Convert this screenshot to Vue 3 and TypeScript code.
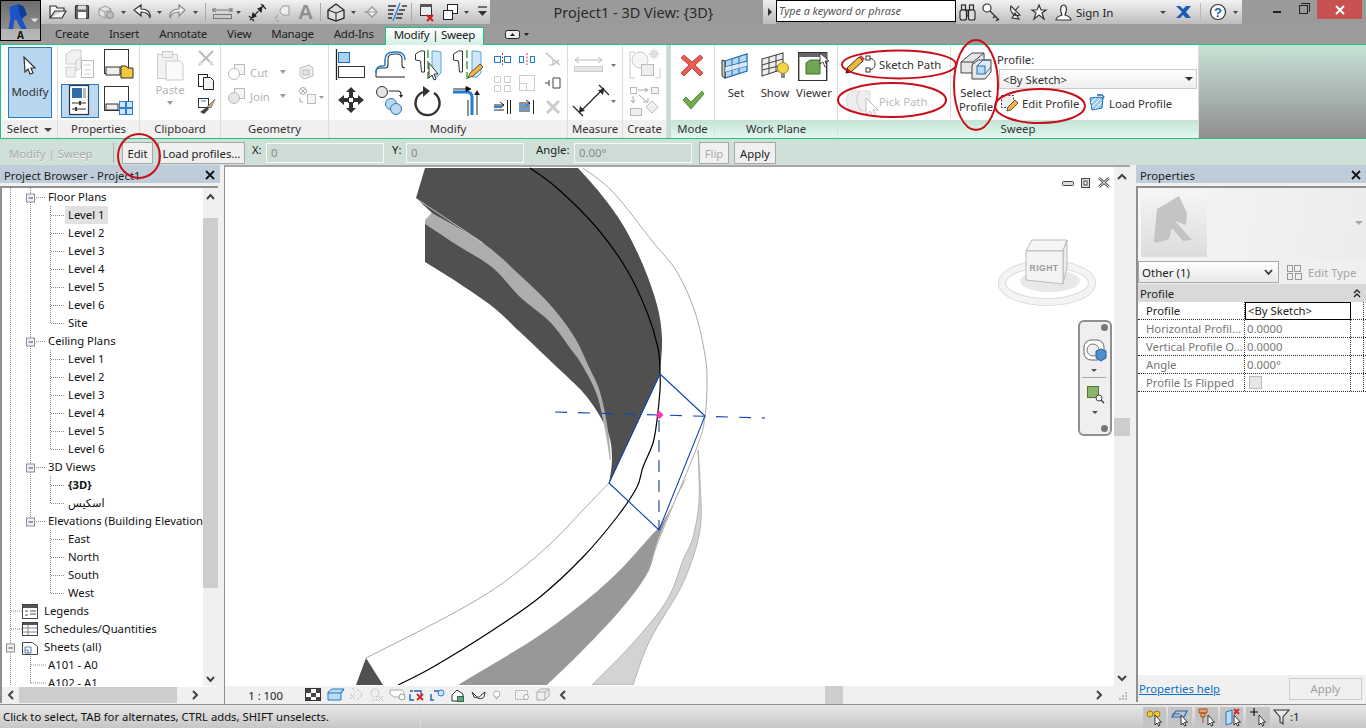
<script setup lang="ts">
interface TreeRow { t: string; cls: string; sel?: boolean; bold?: boolean }
const levels = (prefix: string, n: number): TreeRow[] =>
  Array.from({ length: n }, (_, i) => ({ t: `${prefix} ${i + 1}`, cls: 'leaf' }))
const treeRows: TreeRow[] = [
  { t: 'Floor Plans', cls: 'group' },
  { t: 'Level 1', cls: 'leaf', sel: true },
  ...levels('Level', 6).slice(1),
  { t: 'Site', cls: 'leaf' },
  { t: 'Ceiling Plans', cls: 'group' },
  ...levels('Level', 6),
  { t: '3D Views', cls: 'group' },
  { t: '{3D}', cls: 'leaf', bold: true },
  { t: 'اسکیس', cls: 'leaf' },
  { t: 'Elevations (Building Elevation', cls: 'group' },
  { t: 'East', cls: 'leaf' },
  { t: 'North', cls: 'leaf' },
  { t: 'South', cls: 'leaf' },
  { t: 'West', cls: 'leaf' },
  { t: 'Legends', cls: 'root' },
  { t: 'Schedules/Quantities', cls: 'root' },
  { t: 'Sheets (all)', cls: 'root' },
  { t: 'A101 - A0', cls: 'group' },
  { t: 'A102 - A1', cls: 'group' }
]
const tabs = ['Create', 'Insert', 'Annotate', 'View', 'Manage', 'Add-Ins']
const guides = [
  'M10.5 188V686', 'M30.5 188V517', 'M50.5 206V323', 'M50.5 350V449', 'M50.5 476V503', 'M50.5 530V593',
  'M30.5 652V683', 'M11 611H22', 'M11 629H22', 'M31 665H46', 'M31 683H46'
]
const boxes = [[30.5, 198], [30.5, 342], [30.5, 468], [30.5, 522], [10.5, 648]]
const groupStubs = [198, 342, 468, 522]
const leafStubs = [215, 233, 251, 269, 287, 305, 323, 359, 377, 395, 413, 431, 449, 485, 503, 539, 557, 575, 593]
const props = [
  { k: 'Horizontal Profil...', v: '0.0000' },
  { k: 'Vertical Profile O...', v: '0.0000' },
  { k: 'Angle', v: '0.000°' }
]

// Catmull-Rom curve through model points, in page coordinates
type Pt = number[]
const curve = (pts: Pt[], first = false): string => {
  let d = `${first ? 'M' : 'L'}${pts[0][0]} ${pts[0][1]}`
  for (let i = 0; i < pts.length - 1; i++) {
    const p0 = pts[Math.max(i - 1, 0)]
    const p1 = pts[i]
    const p2 = pts[i + 1]
    const p3 = pts[Math.min(i + 2, pts.length - 1)]
    const c1x = p1[0] + (p2[0] - p0[0]) / 6
    const c1y = p1[1] + (p2[1] - p0[1]) / 6
    const c2x = p2[0] - (p3[0] - p1[0]) / 6
    const c2y = p2[1] - (p3[1] - p1[1]) / 6
    d += `C${c1x.toFixed(1)} ${c1y.toFixed(1)} ${c2x.toFixed(1)} ${c2y.toFixed(1)} ${p2[0]} ${p2[1]}`
  }
  return d
}
const darkBand =
  'M425 168' +
  curve([[578, 168], [600, 193], [623, 225], [643, 265], [657, 305], [662, 338], [660, 375]]) +
  curve([[609, 484], [612, 457], [607, 430], [587, 397], [560, 370], [520, 332], [493, 307], [457, 282], [425, 262]]) +
  'L425 221L432 213L416 198Z'
const greyStrip =
  curve([[432, 213], [483, 243], [522, 277], [553, 308], [575, 338], [588, 365], [600, 392], [608, 430], [611, 460]], true) +
  curve([[610, 460], [605, 430], [597, 395], [582, 365], [570, 348], [550, 322], [520, 297], [493, 268], [457, 245], [425, 224]]) +
  'L425 220Z'
const midBand =
  curve([[687, 477], [678, 493], [658, 540], [648, 572], [623, 607], [583, 650], [547, 685]], true) +
  curve([[458, 685], [483, 670], [537, 637], [583, 603], [617, 573], [650, 537], [664, 520], [687, 477]]) + 'Z'
const lightBand =
  curve([[698, 450], [700, 480], [700, 530], [683, 583], [650, 640], [633, 685]], true) +
  curve([[592, 685], [633, 643], [667, 600], [683, 560], [693, 537], [699, 500], [698, 450]]) + 'Z'
const outerLine = curve([[583, 168], [613, 192], [653, 242], [677, 272], [695, 312], [705, 355], [707, 383], [705, 416], [697, 447], [660, 537], [648, 572]], true)
const innerLine = curve([[609, 483], [583, 510], [547, 547], [500, 585], [450, 615], [366, 658]], true)
const pathLine = curve([[530, 168], [557, 188], [597, 228], [627, 270], [647, 312], [658, 348], [660, 373], [660, 390], [657, 420], [653, 443], [643, 467], [637, 487], [617, 517], [583, 557], [540, 597], [493, 630], [433, 667], [398, 685]], true)
</script>

<template>
  <div class="app">
    <!-- title bar -->
    <header class="titlebar">
      <svg class="qat" width="449" height="24" viewBox="41 0 449 24">
        <g fill="none" stroke="#333" stroke-width="1.2">
          <path d="M50 18V6h6l1 2h7v3H55l-5 7h12l4-7h-3" fill="#f4f4f4"/>
          <rect x="75.500" y="5.500" width="13" height="13" rx="1" fill="#666"/>
          <rect x="78" y="5.500" width="8" height="4" fill="#ddd" stroke="none"/>
          <rect x="78" y="12" width="8" height="6.500" fill="#fff" stroke="none"/>
        </g>
        <g fill="#e2e2e2" stroke="#999">
          <path d="M99 9l6-3 6 3v6l-6 3-6-3z"/><path d="M99 9l6 3 6-3M105 12v6" fill="none"/>
          <circle cx="110" cy="15" r="3.500" fill="#bbb" stroke="#888"/>
        </g>
        <path d="M121 11h5l-2.500 3zM157 11h5l-2.500 3zM193 11h5l-2.500 3zM236 11h5l-2.500 3zM351 11h5l-2.500 3zM464 11h5l-2.500 3z" fill="#444"/>
        <path d="M150 18c-1-4-4-6-9-6v4l-7-6 7-5v4c6 0 10 3 9 9z" fill="#fff" stroke="#333" stroke-width="1.200"/>
        <path d="M170 18c1-4 4-6 9-6v4l6-6-6-5v4c-6 0-10 3-9 9z" fill="#eee" stroke="#888" stroke-width="1.200"/>
        <path d="M205.500 3v18M320.500 3v18M411.500 3v18" stroke="#a9a9a9"/>
        <g stroke="#777" fill="none">
          <path d="M213 10h19M213 8v4M232 8v4M216 8l-3 2 3 2M229 8l3 2-3 2"/>
          <rect x="213.500" y="14.500" width="18" height="4" fill="#ccc"/>
        </g>
        <path d="M250 20l14-15M249 16l5 5M261 4l5 5M252 18l1-5 3 3zM262 7l-1 5-3-3z" stroke="#222" stroke-width="1.100" fill="#222"/>
        <g stroke="#999" fill="none">
          <path d="M275 19l3-5M276 21l3 0"/><path d="M280 10l3-4h6v9h-6l-3-3z" fill="#eee"/>
        </g>
        <text x="298" y="19" class="bigA">A</text>
        <path d="M328 10l8-6 8 6v8l-8 3-8-3z" fill="#ddd" stroke="#222" stroke-width="1.300"/>
        <path d="M328 10l8 3 8-3M336 13v8" fill="none" stroke="#222"/>
        <path d="M372 7l5 5-5 5-5-5z" fill="#f0f0f0" stroke="#999" stroke-width="1.400"/><path d="M377 12h-13" stroke="#999"/>
        <path d="M388 6h8M388 10h6M388 14h5M388 18h4M402 6h5M399 10h6M397 14h6M396 18h6" stroke="#333" stroke-width="1.500"/>
        <path d="M400 3l-7 18" stroke="#2a8adf" stroke-width="1.400"/>
        <rect x="420.500" y="4.500" width="11" height="11" fill="#eee" stroke="#333"/>
        <rect x="420" y="4" width="12" height="3" fill="#555"/>
        <path d="M427 15l6 6M433 15l-6 6" stroke="#d81818" stroke-width="2"/>
        <rect x="447.500" y="4.500" width="10" height="9" fill="#fff" stroke="#222"/>
        <rect x="443.500" y="10.500" width="9" height="9" fill="#fff" stroke="#222"/>
        <path d="M478 7h9" stroke="#333" stroke-width="1.300"/><path d="M478 11h9l-4.500 5z" fill="#333"/>
      </svg>
      <div class="doc-title">Project1 - 3D View: {3D}</div>
      <div class="search-arrow"><i></i></div>
      <div class="search">Type a keyword or phrase</div>
      <div class="help-tools">
        <svg width="120" height="24" viewBox="957 0 120 24">
          <g fill="#dcdcdc" stroke="#222" stroke-width="1.100">
            <rect x="962.500" y="5" width="4" height="5"/><rect x="970.500" y="5" width="4" height="5"/>
            <rect x="961" y="10" width="6.500" height="10" rx="2"/><rect x="969.500" y="10" width="6.500" height="10" rx="2"/>
            <path d="M967.500 10h2v6h-2z" fill="#888"/>
          </g>
          <circle cx="988" cy="8" r="4" fill="#fff" stroke="#333" stroke-width="1.200"/>
          <path d="M991 11l9 9M996 16l-2 2M999 19l-2 2" stroke="#333" stroke-width="1.400"/>
          <path d="M1012 6c-2 6 3 11 9 9zM1016 11l4-5M1013 18l3-5 4 6z" fill="#eee" stroke="#333" stroke-width="1.100"/>
          <path d="M1040 5l2 5h5l-4 3 2 6-5-4-5 4 2-6-4-3h5z" fill="#fff" stroke="#333" stroke-width="1.200"/>
          <path d="M1065 5c-3 0-4 3-3 7l1 3c-3 1-6 2-6 5h15c0-3-3-4-6-5l1-3c1-4 0-7-2-7z" fill="#fff" stroke="#333" stroke-width="1.200"/>
        </svg>
        <span class="signin">Sign In</span>
        <svg class="help-right" width="88" height="24" viewBox="1155 0 88 24">
          <path d="M1161 11h6l-3 3z" fill="#444"/>
          <path d="M1177 6l6 6-6 6h4l3-3 3 3h5l-5-6 5-6h-5l-3 3-3-3z" fill="#1f5cb0"/>
          <path d="M1201.500 3v18" stroke="#bbb"/>
          <circle cx="1219" cy="12" r="7.500" fill="#fff" stroke="#333" stroke-width="1.200"/>
          <text x="1219" y="17" class="qmark">?</text>
          <path d="M1234 11h5l-2.500 3z" fill="#444"/>
        </svg>
      </div>
      <div class="win">
        <span class="w-min"></span><span class="w-max"></span>
        <span class="w-close"><svg width="10" height="10" viewBox="0 0 10 10"><path d="M1 1l8 8M9 1l-8 8" stroke="#fff" stroke-width="2"/></svg></span>
      </div>
    </header>

    <!-- tabs -->
    <nav class="tabs">
      <span v-for="t in tabs" :key="t" class="tab">{{ t }}</span>
      <span class="tab active">Modify | Sweep</span>
      <svg class="tab-toggle" width="24" height="10" viewBox="0 0 24 10">
        <rect x=".5" y=".5" width="14" height="8" rx="2" fill="#eee" stroke="#222"/>
        <path d="M5 6l2.500-3L10 6z" fill="#222"/><path d="M19 3h5l-2.500 3z" fill="#222"/>
      </svg>
    </nav>

    <!-- ribbon -->
    <section class="ribbon">
      <div class="panel p-select">
        <div class="body">
          <button class="modify-btn">
            <svg width="20" height="24" viewBox="0 0 20 24"><path d="M4 3l1 15 3-3 2 5 3-1-2-5h4z" fill="#fff" stroke="#333" stroke-width="1.200"/></svg>
            <span>Modify</span>
          </button>
        </div>
        <div class="plabel">Select <em class="tri"></em></div>
      </div>

      <div class="panel p-props">
        <div class="body">
          <svg width="81" height="75" viewBox="58 45 81 75">
            <g fill="#f1f1f1" stroke="#ccc">
              <path d="M66 54l6-4h9v10l-6 4h-9z"/><path d="M66 67h9v10h-9zM76 61l5-3v10l-5 3z"/>
            </g>
            <rect x="81.500" y="60.500" width="12" height="17" fill="#fff" stroke="#bbb"/><path d="M84 65h7M84 70h7M84 74h7" stroke="#ccc"/>
            <rect x="104.500" y="49.500" width="24" height="24" fill="#fff" stroke="#333"/>
            <rect x="106" y="67" width="14" height="8" fill="#eee" stroke="#333"/>
            <path d="M121 66h5l2 2h5v10h-12z" fill="#f5c93c" stroke="#333"/>
            <rect x="61.500" y="84.500" width="37" height="33" fill="#bcd9f2" stroke="#2a7ac0"/>
            <rect x="69.500" y="85.500" width="19" height="29" fill="#fff" stroke="#333" stroke-width="1.200"/>
            <rect x="72" y="88" width="10" height="10" fill="#2f6ca8"/><rect x="83" y="88" width="3" height="10" fill="#bbb"/>
            <path d="M72 103h14M72 109h14" stroke="#333"/><path d="M80 101v4M76 107v4" stroke="#333" stroke-width="2"/>
            <rect x="104.500" y="86.500" width="24" height="24" fill="#fff" stroke="#333"/>
            <rect x="106" y="104" width="12" height="6" fill="#eee" stroke="#333"/>
            <g fill="#cfe6fa" stroke="#2a83d1"><rect x="119.500" y="101.500" width="6" height="6"/><rect x="126.500" y="101.500" width="6" height="6"/><rect x="119.500" y="108.500" width="6" height="6"/><rect x="126.500" y="108.500" width="6" height="6"/></g>
          </svg>
        </div>
        <div class="plabel">Properties</div>
      </div>

      <div class="panel p-clip">
        <div class="body clip-body">
          <div class="paste">
            <svg width="28" height="32" viewBox="0 0 28 32"><rect x="1.500" y="4.500" width="20" height="24" fill="#f2f2f2" stroke="#ccc"/><rect x="6.500" y="1.500" width="10" height="6" fill="#eee" stroke="#ccc"/><path d="M10 11h14l3 3v16H10z" fill="#fafafa" stroke="#ccc"/></svg>
            <span>Paste</span>
            <em class="tri small"></em>
          </div>
          <div class="clip-side">
            <svg width="16" height="16" viewBox="0 0 16 16"><path d="M1 1l14 14M15 1L1 15" stroke="#bbb" stroke-width="2"/><circle cx="3" cy="13" r="2" fill="#ddd"/><circle cx="13" cy="13" r="2" fill="#ddd"/></svg>
            <svg width="16" height="16" viewBox="0 0 16 16"><rect x=".5" y=".5" width="9" height="12" fill="#fff" stroke="#222"/><path d="M5.500 3.500h7l3 3v9h-10z" fill="#f2f2f2" stroke="#222"/></svg>
            <svg width="18" height="16" viewBox="0 0 18 16"><rect x=".5" y=".5" width="10" height="9" fill="#fff" stroke="#333"/><path d="M3 3h5" stroke="#2a7ac0"/><path d="M2 14l7-5 2 2-5 5z" fill="#444"/><path d="M9 9l8-8-4 9z" fill="#c9a46a" stroke="#555" stroke-width=".6"/></svg>
          </div>
        </div>
        <div class="plabel">Clipboard</div>
      </div>

      <div class="panel p-geo">
        <div class="body geo-body">
          <div class="geo-row">
            <svg width="20" height="18" viewBox="0 0 20 18"><rect x="7.500" y="1.500" width="10" height="10" fill="#f6f6f6" stroke="#bbb"/><circle cx="7" cy="11" r="5.500" fill="#fff" stroke="#bbb"/></svg>
            <span class="geo-t">Cut</span><em class="tri small"></em>
            <svg class="geo-end" width="16" height="16" viewBox="0 0 16 16"><path d="M2 4l9-3 4 3v8l-9 3-4-3z" fill="#f0f0f0" stroke="#bbb"/><rect x="5" y="6" width="6" height="5" fill="#e2e2e2" stroke="#bbb"/></svg>
          </div>
          <div class="geo-row">
            <svg width="20" height="18" viewBox="0 0 20 18"><rect x="7.500" y="1.500" width="10" height="10" fill="#f6f6f6" stroke="#bbb"/><circle cx="7" cy="11" r="5.500" fill="#e6e6e6" stroke="#bbb"/></svg>
            <span class="geo-t">Join</span><em class="tri small"></em>
            <svg class="geo-end" width="26" height="18" viewBox="0 0 26 18"><circle cx="5" cy="4" r="3.500" fill="none" stroke="#aaa"/><path d="M3 2l4 4M7 2l-4 4M2 11v4h3" stroke="#aaa" fill="none"/><rect x="9.500" y="7.500" width="8" height="9" fill="#f4f4f4" stroke="#bbb"/><path d="M21 9h5l-2.500 3z" fill="#999"/></svg>
          </div>
        </div>
        <div class="plabel">Geometry</div>
      </div>

      <div class="panel p-mod">
        <div class="body">
          <svg width="237" height="75" viewBox="329 45 237 75">
            <path d="M336.500 49v31" stroke="#222" stroke-width="1.300"/>
            <rect x="338.500" y="52.500" width="11" height="10" fill="#a9d1f2" stroke="#1d6fb8"/>
            <rect x="338.500" y="66.500" width="26" height="11" fill="#fff" stroke="#333"/>
            <path d="M376 76v-5c0-3 2-4 4-4h5c2 0 3-1 3-3v-6c0-4 3-5 6-5h3c3 0 5 2 5 5v6c0 2 1 3 3 3" fill="none" stroke="#333" stroke-width="1.100" transform="translate(0 1)"/>
            <path d="M376 71c0-5 2-7 6-7h2c1 0 1-1 1-2v-4c0-6 4-8 9-8h3c5 0 8 3 8 8" fill="none" stroke="#1f7ecf" stroke-width="1.500" transform="translate(0 2)"/>
            <path d="M376 77h29" stroke="#333" stroke-width="1.100"/>
            <path d="M415.500 54l5-3h4v21h-3l-1-11-5-1z" fill="#fff" stroke="#333"/>
            <path d="M428 50v29" stroke="#3fa83f" stroke-width="1.500" stroke-dasharray="8 3"/>
            <path d="M441 52l-5-1h-4v26h5l4-4z" fill="#cfe6f7" stroke="#5aa5dc"/>
            <path d="M429 63v15l3-3 2 5 2-1-2-5h4z" fill="#fff" stroke="#333"/>
            <path d="M453.500 54l5-3h4v21h-3l-1-11-5-1z" fill="#fff" stroke="#333"/>
            <path d="M467 50v29" stroke="#3fa83f" stroke-width="1.500" stroke-dasharray="8 3"/>
            <path d="M481 52l-5-1h-4v26h5l4-4z" fill="#cfe6f7" stroke="#5aa5dc"/>
            <path d="M468 78l2-5 10-9 3 3-10 9z" fill="#f3b53c" stroke="#333" stroke-width=".8"/>
            <path d="M351 87l-5 5h3v6h-5v-3l-6 5 6 5v-3h5v6h-3l5 5 5-5h-3v-6h5v3l6-5-6-5v3h-5v-6h3z" fill="#333"/>
            <rect x="348.500" y="97.500" width="5" height="5" fill="#fff" stroke="#333"/>
            <circle cx="382" cy="92" r="5.500" fill="#e4e4e4" stroke="#333"/>
            <path d="M389 91h9c1 0 3 1 3 3v1" fill="none" stroke="#222" stroke-width="1.200"/><path d="M399 95h4l-2 3z" fill="#222"/>
            <circle cx="391" cy="104" r="5.500" fill="#bad8f0" stroke="#2a7ac0"/><circle cx="396" cy="109" r="5.500" fill="#bad8f0" stroke="#2a7ac0"/>
            <path d="M423 92a12 12 0 1 0 11 1" fill="none" stroke="#333" stroke-width="2.400"/>
            <path d="M423 86l7 5-7 6z" fill="#333"/>
            <path d="M453 92h14c3 0 5 2 5 5v18" fill="none" stroke="#1f7ecf" stroke-width="3"/>
            <path d="M453 89h13" stroke="#222"/><path d="M466 86.500l5 2.500-5 2.500zM477 115V94" stroke="#222"/><path d="M480 95l-3-5-3 5z" fill="#222"/>
            <path d="M468 100v16" stroke="#222"/>
            <g fill="none">
              <rect x="494.500" y="56.500" width="6" height="6" stroke="#1f7ecf"/><rect x="504.500" y="56.500" width="6" height="6" stroke="#1f7ecf"/><path d="M502.500 53v12" stroke="#e03030" stroke-dasharray="2 1.500"/>
              <rect x="519.500" y="56.500" width="4" height="6" stroke="#1f7ecf"/><rect x="530.500" y="56.500" width="4" height="6" stroke="#1f7ecf"/><path d="M527 53v12" stroke="#e03030" stroke-dasharray="2 1.500"/>
              <path d="M546 53l7 6v6h-4M554 60l6 5M559 60l-6 5" stroke="#bbb" stroke-width="1.200"/>
              <path d="M494.500 76.500h6v6h-6zM504.500 76.500h6v6h-6zM494.500 85.500h6v6h-6zM504.500 85.500h6v6h-6z" stroke="#ccc"/>
              <rect x="519.500" y="75.500" width="15" height="15" stroke="#ccc"/><rect x="519.500" y="83.500" width="7" height="7" stroke="#ccc"/>
              <path d="M545 83h4M553 78v10h7V78zM549 80v6" stroke="#444"/>
              <path d="M494 105h10M500 102l4 3-4 3M494 110h10M507.500 100v14M510.500 100v14" stroke="#222"/>
              <path d="M494 107h8" stroke="#2a83d1" stroke-width="2"/>
              <path d="M519 103h11M526 100l4 3-4 3M519 107h11M519 111h11M533.500 100v14" stroke="#222"/>
              <path d="M519 105h11M519 109h11" stroke="#2a83d1" stroke-width="1.500"/>
              <path d="M547 101l12 12M559 101l-12 12" stroke="#ccc" stroke-width="3"/>
            </g>
          </svg>
        </div>
        <div class="plabel">Modify</div>
      </div>

      <div class="panel p-meas">
        <div class="body">
          <svg width="52" height="75" viewBox="568 45 52 75">
            <path d="M575 60h27M579 57l-4 3 4 3M598 57l4 3-4 3" fill="none" stroke="#bbb"/>
            <rect x="574.500" y="66.500" width="28" height="5" fill="#e6e6e6" stroke="#ccc"/>
            <path d="M611 64h5l-2.500 3zM611 100h5l-2.500 3z" fill="#777"/>
            <path d="M579 113l25-25M573 106l10 10M599 85l10 10" stroke="#222" stroke-width="1.200"/>
            <path d="M580 106l-1 6 6-1zM603 95l1-6-6 1z" fill="#222"/>
          </svg>
        </div>
        <div class="plabel">Measure</div>
      </div>

      <div class="panel p-create">
        <div class="body">
          <svg width="43" height="75" viewBox="623 45 43 75">
            <path d="M635 52h-5v26h5M655 78h5V68" fill="none" stroke="#ccc"/>
            <circle cx="640" cy="60" r="8" fill="#f7f7f7" stroke="#ccc"/><rect x="641.500" y="64.500" width="12" height="11" fill="#eee" stroke="#bbb"/>
            <circle cx="654" cy="54" r="3.500" fill="#f2f2f2" stroke="#ccc"/><path d="M654 48v12M648 54h12M650 50l8 8M658 50l-8 8" stroke="#ddd"/>
            <rect x="630.500" y="87.500" width="6" height="6" fill="#fff" stroke="#bbb"/><path d="M638 90h9M645 88l3 2-3 2" fill="none" stroke="#aaa"/><rect x="651.500" y="87.500" width="7" height="6" fill="#f2f2f2" stroke="#bbb"/>
            <path d="M633 96v6M631 100l2 3 2-3M639 95l8 7M643 102h5v-4" fill="none" stroke="#aaa"/>
            <rect x="630.500" y="108.500" width="11" height="7" fill="#eee" stroke="#bbb"/><path d="M652 101l6 6-6 6-6-6z" fill="#eee" stroke="#bbb"/>
          </svg>
        </div>
        <div class="plabel">Create</div>
      </div>

      <div class="p-gap"></div>

      <div class="panel ctx p-mode">
        <div class="body">
          <svg width="43" height="75" viewBox="671 45 43 75">
            <path d="M684 55l8 7 8-7 3 3-8 7 8 8-3 3-8-8-8 8-3-3 8-8-8-7z" fill="#e85d52" stroke="#b0352d" stroke-width=".8"/>
            <path d="M683 100l3-3 5 5 11-11 2 3-13 15z" fill="#71ad4c" stroke="#467a2a" stroke-width=".8"/>
          </svg>
        </div>
        <div class="plabel">Mode</div>
      </div>

      <div class="panel ctx p-wp">
        <div class="body wp-body">
          <div class="wp-btn">
            <svg width="30" height="30" viewBox="0 0 30 30"><path d="M4 10l22-7v17L4 27z" fill="#b9d7f0" stroke="#1f6fb8" stroke-width="1.300"/><path d="M11 8v17M18 6v17M4 16l22-6M4 21l22-6" stroke="#1f6fb8"/><path d="M1 9l3 1v17l-3-2z" fill="#ccc" stroke="#333"/><path d="M4 16l22-5v4L4 21z" fill="#e8f2fb" opacity=".7"/></svg>
            <span>Set</span>
          </div>
          <div class="wp-btn">
            <svg width="30" height="30" viewBox="0 0 30 30"><path d="M2 8l21-6v16L2 25z" fill="#eee" stroke="#444" stroke-width="1.100"/><path d="M9 6v17M16 4v17M2 14l21-6M2 19l21-5" stroke="#444"/><circle cx="23" cy="17" r="5.500" fill="#f7d443" stroke="#a78b18"/><rect x="21" y="22" width="4" height="5" fill="#888"/></svg>
            <span>Show</span>
          </div>
          <div class="wp-btn">
            <svg width="32" height="30" viewBox="0 0 32 30"><rect x=".7" y="1.700" width="28" height="28" fill="#fff" stroke="#333" stroke-width="1.400"/><rect x="1" y="2" width="28" height="4" fill="#666"/><path d="M8 12l4-3h10v14H8z" fill="#6da552" stroke="#3d6f2a"/><path d="M22 2v11l3-2 2 5 2-1-2-5h4z" fill="#fff" stroke="#333" stroke-width=".9"/></svg>
            <span>Viewer</span>
          </div>
        </div>
        <div class="plabel">Work Plane</div>
      </div>

      <div class="panel ctx p-sweep">
        <div class="body sweep-body">
          <div class="sw-col1">
            <div class="sw-act">
              <svg width="34" height="22" viewBox="0 0 34 22"><path d="M2 20l1-5L15 4l4 4L7 19z" fill="#f3b53c" stroke="#333"/><path d="M15 4l2-2 4 4-2 2z" fill="#c44"/><path d="M2 20l1-5 4 4z" fill="#222"/><path d="M24 5c4 0 7 2 7 6s-3 6-7 6" fill="none" stroke="#333"/><rect x="22" y="3" width="4" height="4" fill="#fff" stroke="#333"/><rect x="22" y="15" width="4" height="4" fill="#fff" stroke="#333"/></svg>
              <span>Sketch Path</span>
            </div>
            <div class="sw-act off">
              <svg width="34" height="32" viewBox="0 0 34 32"><path d="M7 6c-7 6-6 16 1 20h18V6z" fill="#eee" stroke="#ddd"/><path d="M16 6c-5 5-4 15 2 20" fill="none" stroke="#ddd" stroke-width="2"/><path d="M22 13v17l4-4 3 6 3-1-3-6h5z" fill="#fff" stroke="#bbb"/></svg>
              <span>Pick Path</span>
            </div>
          </div>
          <div class="sw-col2">
            <svg width="34" height="32" viewBox="0 0 34 32"><path d="M2 13l11-9h12v11l-11 9H2z" fill="#e6e6e6" stroke="#444"/><path d="M2 13h12l11-9M14 13v11" fill="none" stroke="#444"/><path d="M13 16l6-5h13v12l-6 7H13z" fill="#e8e8e8" stroke="#444"/><rect x="18" y="17" width="8" height="8" fill="#bdd9f2" stroke="#1f6fb8"/><path d="M26 25l6-7M18 17l6-6h8" fill="none" stroke="#1f6fb8"/></svg>
            <span>Select<br>Profile</span>
          </div>
          <div class="sw-col3">
            <label class="prof-l">Profile:</label>
            <div class="prof-combo"><span>&lt;By Sketch&gt;</span><em class="tri dark"></em></div>
            <div class="prof-acts">
              <div class="prof-act ed">
                <svg width="18" height="18" viewBox="0 0 18 18"><rect x=".5" y="1.500" width="12" height="12" fill="#eee" stroke="#333" stroke-dasharray="2 1.500"/><path d="M6 17l1-4 7-7 3 3-7 7z" fill="#f3b53c" stroke="#333" stroke-width=".8"/></svg>
                <span>Edit Profile</span>
              </div>
              <div class="prof-act">
                <svg width="17" height="18" viewBox="0 0 17 18"><path d="M2 4l10-1 3 1-1 10-10 2z" fill="#9ccbee" stroke="#1f6fb8"/><path d="M4 13l8-8M3 9l5-5M7 15l7-7" stroke="#fff"/><path d="M9 1h5l2 2-2 2" fill="none" stroke="#1f6fb8" stroke-width="1.300"/></svg>
                <span>Load Profile</span>
              </div>
            </div>
          </div>
        </div>
        <div class="plabel">Sweep</div>
      </div>
      <div class="rib-fill"></div>
    </section>

    <!-- options bar -->
    <section class="options">
      <span class="opt-title">Modify | Sweep</span>
      <span class="opt-sep"></span>
      <button class="opt-btn b-edit">Edit</button>
      <button class="opt-btn b-load">Load profiles...</button>
      <span class="opt-l l-x">X:</span><span class="opt-in i-x">0</span>
      <span class="opt-l l-y">Y:</span><span class="opt-in i-y">0</span>
      <span class="opt-l l-a">Angle:</span><span class="opt-in i-a">0.00°</span>
      <button class="opt-btn b-flip" disabled>Flip</button>
      <button class="opt-btn b-apply">Apply</button>
    </section>

    <!-- main -->
    <main class="main">
      <aside class="browser">
        <div class="dock-h"><span>Project Browser - Project1</span><svg width="10" height="10" viewBox="0 0 10 10"><path d="M1 1l8 8M9 1l-8 8" stroke="#111" stroke-width="1.800"/></svg></div>
        <div class="tree-wrap">
          <div class="tree-row-h">
            <div class="tree">
              <svg class="tree-lines" width="203" height="498" viewBox="0 188 203 498">
                <g stroke="#8a8a8a" stroke-dasharray="1 1" fill="none">
                  <path v-for="g in guides" :key="g" :d="g"/>
                  <path v-for="y in groupStubs" :key="'g' + y" :d="`M36 ${y - 0.5}H46`"/>
                  <path v-for="y in leafStubs" :key="'l' + y" :d="`M51 ${y + 0.5}H65`"/>
                </g>
                <g v-for="b in boxes" :key="b[1]">
                  <rect :x="b[0] - 4" :y="b[1] - 4" width="8" height="8" fill="#f0f0f0" stroke="#8f8f8f"/>
                  <path :d="`M${b[0] - 2} ${b[1]}H${b[0] + 2.5}`" stroke="#2a4f8f"/>
                </g>
                <g fill="#fff" stroke="#444">
                  <rect x="22.500" y="604.500" width="15" height="14"/><rect x="23" y="605" width="14" height="3" fill="#555" stroke="none"/><path d="M25 611h3M25 615h3M30 611h6M30 614h6" stroke="#555"/>
                  <rect x="22.500" y="622.500" width="15" height="13"/><rect x="23" y="623" width="14" height="2" fill="#555" stroke="none"/><path d="M23 628h14M23 632h14M28 625v10" stroke="#888"/>
                  <path d="M22.500 642.500h10l5 4v8h-15z"/><path d="M25 647h6v6h-6zM25 650h3v3" fill="none" stroke="#5c7fa8"/>
                </g>
              </svg>
              <div v-for="(r, i) in treeRows" :key="i" class="t-row" :class="r.cls">
                <span :class="{ sel: r.sel, bold: r.bold }">{{ r.t }}</span>
              </div>
            </div>
            <div class="vsb">
              <svg width="15" height="17" viewBox="0 0 15 17"><path d="M4 11l3.500-4L11 11" fill="none" stroke="#444" stroke-width="2"/></svg>
              <div class="vsb-track"><div class="vsb-thumb"></div></div>
              <svg width="15" height="17" viewBox="0 0 15 17"><path d="M4 8l3.500 4L11 8" fill="none" stroke="#444" stroke-width="2"/></svg>
            </div>
          </div>
          <div class="hsb">
            <svg width="17" height="16" viewBox="0 0 17 16"><path d="M11 4L7 8l4 4" fill="none" stroke="#444" stroke-width="2"/></svg>
            <div class="hsb-thumb"></div>
            <svg class="hsb-r" width="19" height="16" viewBox="0 0 19 16"><path d="M7 4l4 4-4 4" fill="none" stroke="#444" stroke-width="2"/></svg>
          </div>
        </div>
      </aside>

      <section class="view-wrap">
        <div class="view-top">
          <div class="view">
            <svg class="scene" width="889" height="518" viewBox="225 167 889 518">
              <path :d="lightBand" fill="#d3d3d3" stroke="#a8a8a8" stroke-width=".8"/>
              <path :d="midBand" fill="#989898"/>
              <path :d="darkBand" fill="#505050"/>
              <path :d="greyStrip" fill="#adadad"/>
              <path d="M417 199L483 243" stroke="#dedede" stroke-width=".8"/>
              <path :d="outerLine" fill="none" stroke="#aaa"/>
              <path :d="innerLine" fill="none" stroke="#aaa"/>
              <path d="M366 658L356 685H383z" fill="#505050"/>
              <path :d="pathLine" fill="none" stroke="#000" stroke-width="1.200"/>
              <path d="M660 374L705 416 659 530 609 483z" fill="none" stroke="#0f46b4" stroke-width="1.100"/>
              <path d="M555 412L765 418" fill="none" stroke="#0f46b4" stroke-width="1.100" stroke-dasharray="12 11"/>
              <path d="M659 420V530" fill="none" stroke="#1a3c8f" stroke-width="1.100" stroke-dasharray="12 8"/>
              <path d="M659.500 411l4 4-4 4-4-4z" fill="#ff33b4"/>

              <!-- view window buttons -->
              <rect x="1062.500" y="181.500" width="11" height="4" rx="1" fill="#ddd" stroke="#444"/>
              <rect x="1081.500" y="178.500" width="8" height="9" fill="#ddd" stroke="#444"/><rect x="1084" y="181" width="3" height="4" fill="#fff" stroke="#444"/>
              <path d="M1099 178l10 9M1109 178l-10 9" stroke="#555" stroke-width="2.600"/><path d="M1099 178l10 9M1109 178l-10 9" stroke="#eee" stroke-width="1"/>

              <!-- view cube -->
              <ellipse cx="1047" cy="283" rx="45" ry="19" fill="none" stroke="#dcdcdc" stroke-width="8"/>
              <ellipse cx="1047" cy="283" rx="45" ry="19" fill="none" stroke="#f4f4f4" stroke-width="6"/>
              <ellipse cx="1050" cy="281" rx="30" ry="11" fill="#d8d8d8" opacity=".6"/>
              <path d="M1026 251l6-11h35l-4 11z" fill="#f6f6f6" stroke="#bbb"/>
              <path d="M1063 251l4-11v27l-4 17z" fill="#ececec" stroke="#bbb"/>
              <path d="M1026 251h37v33l-37-4z" fill="#f4f4f4" stroke="#bbb"/>
              <text x="1044" y="271" class="cube-t">RIGHT</text>
            </svg>

            <div class="navbar">
              <span class="nav-x"></span>
              <svg width="28" height="38" viewBox="0 0 28 38"><rect x="4" y="4" width="20" height="20" rx="7" fill="#fff" stroke="#666"/><circle cx="13" cy="14" r="6" fill="#eee" stroke="#777"/><path d="M16 15l5-2 5 2v7l-5 3-5-3z" fill="#4e8fd0" stroke="#2a5f9a"/><path d="M11 33h6l-3 3z" fill="#555"/></svg>
              <hr>
              <svg width="28" height="38" viewBox="0 0 28 38"><rect x="7.500" y="6.500" width="11" height="11" fill="#8cb46a" stroke="#4f7a33"/><circle cx="19" cy="18" r="3" fill="#fff" stroke="#444"/><path d="M21 20l3 3" stroke="#444" stroke-width="1.500"/><path d="M12 31h6l-3 3z" fill="#555"/></svg>
              <span class="nav-m"></span>
            </div>
          </div>
          <div class="view-vsb">
            <svg width="16" height="16" viewBox="0 0 16 16"><path d="M4 10l4-4 4 4" fill="none" stroke="#444" stroke-width="2"/></svg>
            <div class="vv-thumb"></div>
            <svg class="vv-down" width="16" height="16" viewBox="0 0 16 16"><path d="M4 6l4 4 4-4" fill="none" stroke="#444" stroke-width="2"/></svg>
          </div>
        </div>
        <div class="view-bar">
          <span class="scale">1 : 100</span>
          <svg class="vb-icons" width="256" height="18" viewBox="303 686 256 18">
            <rect x="305.500" y="688.500" width="15" height="12" fill="#fff" stroke="#333"/><path d="M306 689h5v4h-5zM316 689h4v4h-4zM311 693h5v4h-5zM306 697h5v3h-5zM316 697h4v3h-4z" fill="#444"/>
            <path d="M328 692l4-3h12l-3 4v7h-13z" fill="#bcdcf5" stroke="#1f78c8"/><path d="M328 693h13l3-4" fill="none" stroke="#1f78c8"/>
            <g stroke="#aaa" fill="none" stroke-dasharray="1 1">
              <path d="M350 694l5 5M355 694l-5 5M357 689l6 6M362 695l-5 5M352 688l4 4"/>
              <circle cx="375" cy="693" r="4"/><path d="M372 700h6M378 696l5 5M383 696l-5 5"/>
            </g>
            <path d="M390 690h12l2 2v5h-10l-4-3z" fill="#fff" stroke="#aaa"/><circle cx="402" cy="697" r="3" fill="#fff" stroke="#999"/>
            <path d="M410 694v6h4M414 691h7v4M410 691h3" fill="none" stroke="#1f66b8" stroke-width="1.400"/><path d="M417 694l6 6M423 694l-6 6" stroke="#d82020" stroke-width="1.800"/>
            <path d="M431 694v6h3M434 691h7v5" fill="none" stroke="#1f66b8" stroke-width="1.400"/><circle cx="441" cy="693" r="3" fill="#cfe6fa" stroke="#2a83d1"/>
            <path d="M452 695l5-5 6 4v7h-11z" fill="#fff" stroke="#333"/><rect x="457.500" y="696.500" width="6" height="5" fill="#5fa67f" stroke="#2f6a4b"/>
            <path d="M472 692l4 4c1 2 5 1 5-1l4-3-1 5c-2 2-5 2-6 1l-4-1z" fill="#fff" stroke="#333"/>
            <path d="M497 691a3 3 0 1 1 0 6v2h-1v-2a3 3 0 0 1 1-6z" fill="#fff" stroke="#aaa"/>
            <rect x="515.500" y="690.500" width="12" height="9" fill="none" stroke="#aaa" stroke-dasharray="2 1"/><circle cx="526" cy="697" r="2.500" fill="#fff" stroke="#aaa"/>
            <path d="M537 692l4-3h8v7l-4 4h-8z" fill="none" stroke="#aaa"/><path d="M537 692h8v8M545 692l4-3" fill="none" stroke="#aaa"/>
          </svg>
          <svg class="vb-arrow vb-left" width="12" height="18" viewBox="0 0 12 18"><path d="M8 5L4 9l4 4" fill="none" stroke="#444" stroke-width="2"/></svg>
          <div class="vb-track"><div class="vb-thumb"></div></div>
          <svg class="vb-arrow" width="12" height="18" viewBox="0 0 12 18"><path d="M4 5l4 4-4 4" fill="none" stroke="#444" stroke-width="2"/></svg>
          <svg class="vb-grip" width="16" height="18" viewBox="0 0 16 18"><path d="M11 6h2v2h-2zM8 9h2v2H8zM11 9h2v2h-2zM5 12h2v2H5zM8 12h2v2H8zM11 12h2v2h-2z" fill="#bdbdbd"/></svg>
        </div>
      </section>

      <aside class="props">
        <div class="dock-h"><span>Properties</span><svg width="10" height="10" viewBox="0 0 10 10"><path d="M1 1l8 8M9 1l-8 8" stroke="#111" stroke-width="1.800"/></svg></div>
        <div class="props-in">
          <div class="preview">
            <div class="thumb">
              <svg width="66" height="66" viewBox="0 0 66 66"><path d="M16 18L38 5l8 17-1 12-11-4 17 19-9 1-11-13-3 11-13 4-2-2z" fill="#c4c4c4"/></svg>
            </div>
            <em class="tri pv"></em>
          </div>
          <div class="type-row">
            <div class="type-sel"><span>Other (1)</span><svg width="9" height="7" viewBox="0 0 9 7"><path d="M1 1l3.500 4L8 1" fill="none" stroke="#333" stroke-width="1.800"/></svg></div>
            <div class="edit-type">
              <svg width="17" height="17" viewBox="0 0 17 17" fill="none" stroke="#999"><rect x="1.500" y="1.500" width="5" height="6"/><rect x="8.500" y="1.500" width="6" height="6"/><rect x="1.500" y="9.500" width="5" height="6"/><rect x="9.500" y="9.500" width="6" height="6"/></svg>
              <span>Edit Type</span>
            </div>
          </div>
          <div class="pgroup"><span>Profile</span><svg width="8" height="9" viewBox="0 0 8 9"><path d="M1 4l3-3 3 3M1 8l3-3 3 3" fill="none" stroke="#222" stroke-width="1.300"/></svg></div>
          <div class="prow">
            <span class="pk dark">Profile</span>
            <span class="pv-cell edit">&lt;By Sketch&gt;</span>
            <span class="pe"></span>
          </div>
          <div v-for="p in props" :key="p.k" class="prow">
            <span class="pk">{{ p.k }}</span><span class="pv-cell">{{ p.v }}</span><span class="pe"></span>
          </div>
          <div class="prow">
            <span class="pk">Profile Is Flipped</span><span class="pv-cell"><i class="chk"></i></span><span class="pe"></span>
          </div>
          <div class="props-fill"></div>
          <div class="props-foot">
            <a class="help-link">Properties help</a>
            <button class="apply" disabled>Apply</button>
          </div>
        </div>
      </aside>
    </main>

    <!-- status -->
    <footer class="status">
      <span class="st-text">Click to select, TAB for alternates, CTRL adds, SHIFT unselects.</span>
      <span class="st-div"></span>
      <svg class="st-icons" width="128" height="22" viewBox="1143 705 128 22">
        <g fill="#c4c4c4"><rect x="1143" y="706" width="23" height="20"/><rect x="1168" y="706" width="24" height="20"/><rect x="1195" y="706" width="23" height="20"/><rect x="1220" y="706" width="23" height="20"/><rect x="1246" y="706" width="24" height="20"/></g>
        <g fill="#f2c531" stroke="#8a6a10" stroke-width=".8"><circle cx="1150" cy="713" r="3"/><circle cx="1157" cy="713" r="3"/></g>
        <path d="M1172 716h12l3-6h-11zM1172 713h8" fill="none" stroke="#1f66b8" stroke-width="1.200"/>
        <path d="M1199 708h8v4h-8zM1201 712h4v4h-4zM1203 716v6" fill="#f2a070" stroke="#a05020"/>
        <path d="M1226 711l6-2v13l-6 2z" fill="#bcdcf5" stroke="#1f78c8"/><path d="M1234 708l5 5M1239 708l-5 5" stroke="#d82020" stroke-width="1.800"/>
        <path d="M1254 707v8M1250 711h8" stroke="#111" stroke-width="1.200"/>
        <g fill="#fff" stroke="#222" stroke-width=".9">
          <path d="M1155 714v10l2-2 1.500 3 1.500-.7-1.500-3h3z"/><path d="M1181 714v10l2-2 1.500 3 1.500-.7-1.500-3h3z"/><path d="M1208 714v10l2-2 1.500 3 1.500-.7-1.500-3h3z"/><path d="M1234 714v10l2-2 1.500 3 1.500-.7-1.500-3h3z"/><path d="M1259 714v10l2-2 1.500 3 1.500-.7-1.500-3h3z"/>
        </g>
      </svg>
      <div class="st-filter">
        <svg width="17" height="18" viewBox="0 0 17 18"><path d="M1 2h15l-6 7v7l-3-2V9z" fill="#e8e8e8" stroke="#333" stroke-width="1.100"/></svg>
        <span>:1</span>
      </div>
    </footer>

    <!-- hand-drawn annotation marks over the interface -->
    <svg class="marks" width="1366" height="728" viewBox="0 0 1366 728">
      <g fill="none" stroke="#c8101a" stroke-width="2">
        <ellipse cx="139" cy="156" rx="21" ry="22"/>
        <ellipse cx="899" cy="64.500" rx="57" ry="14"/>
        <ellipse cx="892" cy="100" rx="54" ry="17"/>
        <ellipse cx="976" cy="85" rx="22" ry="45"/>
        <ellipse cx="1040" cy="106" rx="45" ry="17"/>
      </g>
    </svg>

    <!-- application button -->
    <div class="appbtn">
      <svg width="40" height="30" viewBox="0 0 40 30">
        <path d="M8 6l9-3 6 3 3 8-5 4 5 11h-6l-5-10-2 1-1 9H7l2-11z" fill="#1d54c8"/>
        <path d="M17 3l6 3 3 8-5 4-3-6z" fill="#123a99"/>
        <path d="M30 18h8l-4 4z" fill="#e6e6e6"/>
      </svg>
      <span>A</span>
    </div>
  </div>
</template>

<style>
html, body { margin: 0; background: #f0f0f0; }
</style>

<style scoped>
.app {
  position: relative;
  width: 1366px;
  height: 728px;
  overflow: hidden;
  font-family: "Noto Sans", "DejaVu Sans", sans-serif;
  font-size: 11.3px;
  color: #222;
  display: flex;
  flex-direction: column;
  background: #f0f0f0;
}
em { font-style: normal; }
button { font: inherit; padding: 0; }

/* title */
.titlebar { height: 24px; display: flex; background: #9a9a9a; padding-left: 41px; flex: none; }
.qat { background: linear-gradient(#f2f2f2, #bcbcbc); flex: none; }
.bigA { font: bold 21px "Liberation Sans", sans-serif; fill: #8e8e8e; }
.qmark { font: bold 13px "Liberation Sans", sans-serif; fill: #1f5cb0; text-anchor: middle; }
.doc-title { width: 273px; padding-left: 14px; box-sizing: border-box; text-align: center; font-size: 14.5px; line-height: 24px; color: #2b2b2b; }
.search-arrow { width: 13px; background: linear-gradient(#eee, #bcbcbc); display: flex; align-items: center; justify-content: center; }
.search-arrow i { border-left: 4px solid #333; border-top: 4px solid transparent; border-bottom: 4px solid transparent; }
.search { width: 180px; height: 22px; box-sizing: border-box; background: #fff; border: 1px solid #000; font-style: italic; font-size: 10.8px; line-height: 20px; padding-left: 2px; color: #555; }
.help-tools { width: 286px; display: flex; background: linear-gradient(#f2f2f2, #bcbcbc); }
.signin { width: 78px; font-size: 11.5px; line-height: 25px; color: #222; }
.win { flex: 1; position: relative; display: flex; padding-left: 31px; }
.w-min { width: 8px; height: 2px; background: #222; margin-top: 11px; }
.w-max { width: 7px; height: 7px; border: 1px solid #222; margin: 5px 0 0 18px; box-shadow: 1px -1px 0 #9a9a9a, 2px -2px 0 #222; }
.w-close { width: 45px; height: 19px; background: #c75050; margin-left: 9px; display: flex; align-items: center; justify-content: center; }

/* tabs */
.tabs { height: 20px; background: #9c9c9c; display: flex; padding-left: 55px; gap: 20px; flex: none; align-items: flex-end; font-size: 11.5px; letter-spacing: -.25px; }
.tab { line-height: 18px; color: #222; padding-bottom: 1px; }
.tab.active { margin-left: -9px; padding: 0 8px; height: 18px; box-sizing: border-box; line-height: 13px; background: linear-gradient(#fff, #d3efe5); border: 1px solid #1fc27f; border-bottom: 0; position: relative; top: 1px; }
.tab-toggle { margin: 0 0 4px 1px; }

/* ribbon */
.ribbon { height: 95px; box-sizing: border-box; flex: none; background: #fff; border-top: 1px solid #1fc27f; border-bottom: 1px solid #1fc27f; border-left: 1px solid #1fc27f; display: flex; padding-left: 1px; }
.panel { display: flex; flex-direction: column; border-right: 1px solid #dcdcdc; flex: none; box-sizing: border-box; }
.body { height: 75px; flex: none; display: flex; box-sizing: border-box; }
.plabel { flex: 1; background: #f0f0f0; color: #333; text-align: center; font-size: 11.3px; line-height: 17px; }
.ctx .plabel { background: linear-gradient(#c5e2d4, #e2f9f1); }
.tri { display: inline-block; border-top: 4px solid #444; border-left: 4px solid transparent; border-right: 4px solid transparent; vertical-align: middle; margin-left: 3px; }
.tri.small { border-top-color: #999; border-left-width: 3px; border-right-width: 3px; }
.p-select { width: 56px; }
.p-props { width: 82px; }
.p-clip { width: 81px; }
.p-geo { width: 108px; }
.p-mod { width: 239px; }
.p-meas { width: 55px; }
.p-create { width: 44px; }
.p-gap { width: 4px; background: #c5dcd1; flex: none; }
.p-mode { width: 44px; }
.p-wp { width: 123px; }
.p-sweep { width: 361px; }
.rib-fill { flex: 1; background: linear-gradient(#c7e2d6, #8f8f8f); }
.modify-btn { width: 44px; height: 71px; margin: 2px 0 0 6px; border: 1px solid #2a7ac0; background: #b8d6ef; display: flex; flex-direction: column; align-items: center; color: #333; font-size: 11.5px; padding-top: 6px; box-sizing: border-box; gap: 6px; }
.clip-body { padding-left: 15px; gap: 13px; }
.paste { display: flex; flex-direction: column; align-items: center; width: 30px; padding-top: 5px; color: #b4b4b4; font-size: 11.3px; line-height: 16px; }
.paste .tri { margin: 3px 0 0; }
.clip-side { display: flex; flex-direction: column; gap: 8px; padding-top: 5px; }
.geo-body { flex-direction: column; padding: 17px 0 0 6px; gap: 4px; }
.geo-row { display: flex; align-items: center; height: 20px; color: #b4b4b4; font-size: 11.3px; gap: 3px; }
.geo-t { width: 26px; }
.geo-row .tri { margin-left: 1px; }
.geo-row .geo-end { margin-left: 9px; }
.wp-body { padding: 6px 0 0 2px; gap: 0; }
.wp-btn { width: 38px; display: flex; flex-direction: column; align-items: center; font-size: 11.3px; gap: 4px; color: #333; line-height: 16px; }
.wp-btn + .wp-btn { margin-left: 1px; }
.sweep-body { padding-left: 6px; }
.sw-col1 { width: 107px; border-right: 1px solid #dcdcdc; display: flex; flex-direction: column; padding-top: 8px; margin-bottom: 2px; box-sizing: border-box; }
.sw-act { display: flex; align-items: center; gap: 1px; font-size: 11.3px; color: #333; height: 22px; }
.sw-act.off { color: #bbb; height: 32px; margin-top: 10px; }
.sw-col2 { width: 50px; display: flex; flex-direction: column; align-items: center; padding-top: 4px; font-size: 11.3px; line-height: 14px; text-align: center; color: #333; gap: 5px; flex: none; }
.sw-col3 { display: flex; flex-direction: column; width: 200px; margin-left: -4px; flex: none; }
.prof-l { font-size: 11.3px; line-height: 16px; margin-top: 7px; color: #333; }
.prof-combo { margin: 1px 0 0 2px; width: 198px; height: 20px; box-sizing: border-box; border: 1px solid #ccc; background: linear-gradient(#fff, #eee); display: flex; align-items: center; justify-content: space-between; padding: 0 3px; font-size: 11.3px; color: #333; }
.tri.dark { border-top-color: #333; }
.prof-acts { display: flex; margin: 5px 0 0 4px; gap: 2px; font-size: 11.3px; color: #333; }
.prof-act { display: flex; align-items: center; gap: 4px; }
.prof-act.ed { width: 85px; gap: 3px; }

/* options */
.options { height: 26px; flex: none; background: #cfe0d9; display: flex; align-items: center; font-size: 11.3px; padding-top: 2px; box-sizing: border-box; }
.opt-title { padding-left: 9px; width: 95px; color: #a9a9a9; text-shadow: 0 1px 0 #f3f8f6; font-size: 11.3px; }
.opt-sep { width: 1px; height: 20px; background: #a5b2ac; margin: 0 8px 0 9px; }
.opt-btn { height: 22px; background: #f0f0f0; border: 1px solid #a7a7a7; color: #222; font-size: 11.3px; box-sizing: border-box; }
.b-edit { width: 31px; }
.b-load { width: 87px; margin-left: 5px; }
.opt-l { color: #222; align-self: flex-start; padding-top: 1px; }
.l-x { margin-left: 7px; width: 14px; }
.l-y { margin-left: 8px; width: 14px; }
.l-a { margin-left: 12px; width: 38px; }
.opt-in { height: 20px; box-sizing: border-box; width: 118px; background: #cdddd6; border: 1px solid #f6f9f8; color: #888; padding-left: 4px; line-height: 18px; }
.b-flip { width: 30px; margin-left: 7px; color: #aaa; }
.b-apply { width: 42px; margin-left: 5px; }

/* main */
.main { flex: 1; display: flex; min-height: 0; }
.dock-h { height: 18px; flex: none; box-sizing: border-box; background: #bfcddb; display: flex; justify-content: space-between; align-items: center; padding: 2px 5px 0 4px; font-size: 11.3px; color: #222; }
.browser { width: 220px; flex: none; display: flex; flex-direction: column; }
.tree-wrap { margin-top: 3px; flex: 1; border-top: 2px solid #8f8f8f; border-left: 2px solid #8f8f8f; margin-right: 2px; background: #fff; display: flex; flex-direction: column; min-height: 0; margin-bottom: 1px; }
.tree-row-h { flex: 1; display: flex; min-height: 0; }
.tree { position: relative; width: 201px; overflow: hidden; height: 498px; }
.tree-lines { position: absolute; left: -2px; top: 0; }
.t-row { position: relative; height: 18px; line-height: 18px; white-space: nowrap; font-size: 11.3px; color: #111; }
.t-row.group { padding-left: 46px; }
.t-row.leaf { padding-left: 66px; }
.t-row.root { padding-left: 42px; }
.t-row .sel { background: #e1e1e1; display: inline-block; padding: 0 3px; margin-left: -3px; }
.t-row .bold { font-weight: 700; }
.vsb { width: 15px; flex: none; background: #f0f0f0; display: flex; flex-direction: column; height: 498px; }
.vsb svg { flex: none; }
.vsb-track { flex: 1; padding-top: 13px; box-sizing: border-box; }
.vsb-thumb { height: 370px; background: #cdcdcd; }
.hsb { height: 16px; background: #f0f0f0; display: flex; flex: none; }
.hsb-thumb { width: 158px; background: #cdcdcd; }
.hsb-r { margin-left: auto; margin-right: 13px; }

.view-wrap { width: 906px; margin-left: 4px; flex: none; border-left: 1px solid #8f8f8f; display: flex; flex-direction: column; border-top: 2px solid #a5a5a5; box-sizing: border-box; }
.view-top { flex: 1; display: flex; min-height: 0; }
.view { position: relative; width: 889px; background: #fff; overflow: hidden; }
.scene { display: block; }
.cube-t { font: bold 8.5px "Liberation Sans", sans-serif; fill: #9a9a9a; text-anchor: middle; letter-spacing: .5px; }
.navbar { position: absolute; left: 853px; top: 153px; width: 34px; height: 116px; box-sizing: border-box; background: #efefef; border: 2px solid #8f8f8f; border-radius: 6px; display: flex; flex-direction: column; align-items: center; padding: 14px 2px 0 0; }
.navbar svg { flex: none; }
.navbar hr { width: 24px; margin: 3px 0 2px; border: 0; border-top: 1px solid #aaa; flex: none; }
.nav-x, .nav-m { position: absolute; right: 2px; width: 7px; height: 7px; border-radius: 50%; background: #777; }
.nav-x { top: 2px; }
.nav-m { bottom: 2px; }
.view-vsb { width: 16px; background: #f0f0f0; flex: none; display: flex; flex-direction: column; padding-top: 2px; box-sizing: border-box; }
.view-vsb svg { flex: none; }
.vv-thumb { height: 18px; background: #cdcdcd; margin-top: 233px; }
.vv-down { margin-top: auto; }
.view-bar { height: 18px; flex: none; background: #f0f0f0; display: flex; align-items: center; }
.scale { text-align: right; font-size: 11.3px; color: #222; flex: none; width: 56px; margin-left: 2px; }
.vb-icons { margin-left: 20px; flex: none; }
.vb-arrow { flex: none; }
.vb-left { margin-left: -2px; }
.vb-track { flex: 1; height: 18px; padding-left: 256px; box-sizing: border-box; }
.vb-thumb { width: 18px; height: 18px; background: #cdcdcd; }
.vb-grip { margin-left: 9px; flex: none; }

.props { flex: 1; margin-left: 6px; display: flex; flex-direction: column; min-width: 0; }
.props-in { flex: 1; margin-top: 3px; border-top: 2px solid #8f8f8f; border-left: 2px solid #8f8f8f; background: #fff; display: flex; flex-direction: column; min-height: 0; margin-bottom: 2px; }
.preview { height: 72px; flex: none; background: linear-gradient(100deg, #f6f6f6, #f0f0f0 60%, #ececec); position: relative; padding: 3px 0 0 3px; box-sizing: border-box; }
.thumb { width: 66px; height: 66px; background: linear-gradient(#f5f5f5, #dcdcdc); }
.tri.pv { position: absolute; right: 3px; top: 33px; border-top-color: #aaa; }
.type-row { display: flex; height: 24px; flex: none; background: #f0f0f0; align-items: center; }
.type-sel { width: 141px; height: 22px; box-sizing: border-box; border: 1px solid #a9a9a9; background: linear-gradient(#fff, #e8e8e8); display: flex; align-items: center; justify-content: space-between; padding: 0 5px 0 3px; font-size: 11.5px; color: #222; }
.edit-type { margin-left: 7px; display: flex; align-items: center; gap: 5px; color: #a5a5a5; font-size: 11.3px; }
.pgroup { height: 18px; flex: none; background: #d9d9d9; display: flex; align-items: center; justify-content: space-between; padding: 0 5px 0 2px; font-size: 11.3px; color: #222; }
.prow { display: flex; height: 18px; flex: none; border-bottom: 1px dotted #333; box-sizing: border-box; font-size: 11.3px; color: #777; }
.pk { width: 107px; padding-left: 8px; box-sizing: border-box; border-right: 1px dotted #333; line-height: 17px; white-space: nowrap; overflow: hidden; flex: none; }
.pk.dark { color: #222; }
.pv-cell { width: 106px; padding-left: 2px; box-sizing: border-box; line-height: 17px; flex: none; border-right: 1px dotted #333; }
.pv-cell.edit { border: 1px solid #000; color: #222; line-height: 15px; height: 18px; }
.pe { width: 12px; border-right: 1px dotted #333; flex: none; }
.chk { display: block; width: 13px; height: 13px; margin: 2px 0 0 2px; background: #e6e6e6; border: 1px solid #bbb; box-sizing: border-box; }
.props-fill { flex: 1; }
.props-foot { height: 27px; flex: none; background: #f0f0f0; display: flex; align-items: center; justify-content: space-between; padding: 0 4px 0 1px; font-size: 11.3px; }
.help-link { color: #0f6fc6; text-decoration: underline; }
.apply { width: 73px; height: 22px; border: 1px solid #ccc; background: #f0f0f0; color: #a0a0a0; font-size: 11.3px; }

/* status */
.status { height: 24px; flex: none; box-sizing: border-box; border-top: 1px solid #8e8e8e; background: linear-gradient(#e8e8e8, #c6c6c6); display: flex; align-items: center; }
.st-text { width: 420px; padding-left: 3px; box-sizing: border-box; font-size: 11.3px; color: #111; white-space: nowrap; flex: none; }
.st-div { width: 1px; height: 22px; background: #d9d9d9; flex: none; }
.st-icons { margin-left: 722px; flex: none; }
.st-filter { display: flex; align-items: center; margin-left: 2px; gap: 0; font-size: 11.5px; color: #222; }

/* overlays */
.marks { position: absolute; left: 0; top: 0; pointer-events: none; }
.appbtn { position: absolute; left: 0; top: 0; width: 41px; height: 41px; box-sizing: border-box; border: 1px solid #000; background: linear-gradient(#6d6d6d, #8f8f8f 72%, #b2b2b2 73%, #b9b9b9); display: flex; flex-direction: column; align-items: center; font-size: 10px; font-weight: 700; color: #111; }
.appbtn span { line-height: 10px; }
</style>
